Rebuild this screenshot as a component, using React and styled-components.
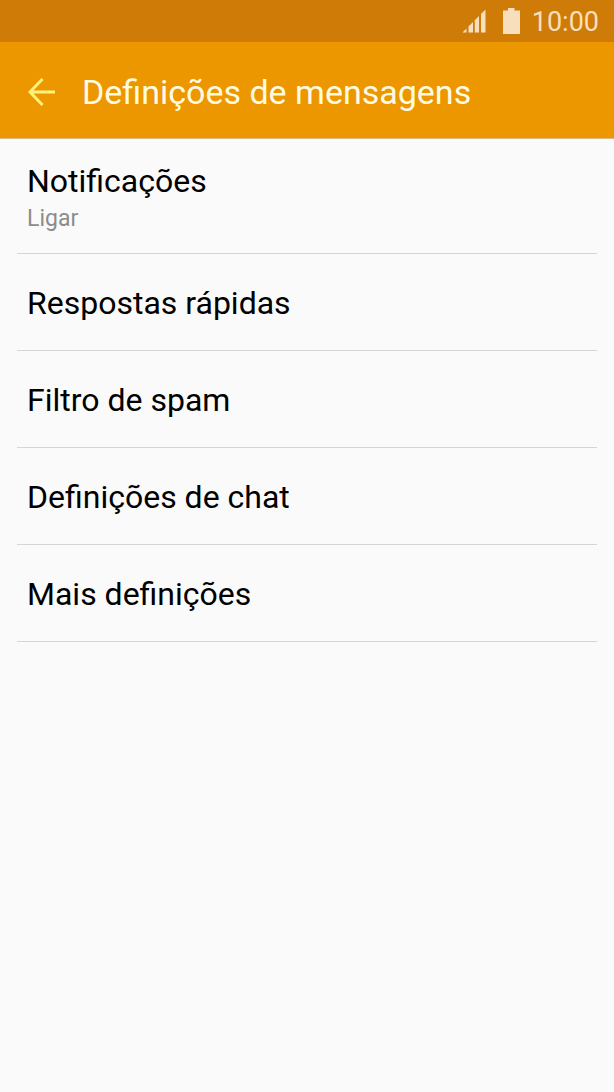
import React from 'react'
import styled, { createGlobalStyle } from 'styled-components'

const settings = [
    { id: 'notifications', title: 'Notificações', summary: 'Ligar' },
    { id: 'quick-replies', title: 'Respostas rápidas' },
    { id: 'spam', title: 'Filtro de spam' },
    { id: 'chat', title: 'Definições de chat' },
    { id: 'more', title: 'Mais definições' },
]

function SignalIcon() {
    return (
        <svg width="24" height="24" viewBox="0 0 24 24" fill="currentColor" aria-hidden="true">
            <path d="M0.5 23.5L4.5 19.5V23.5Z" />
            <path d="M6.5 23.5V17.5L11 13V23.5Z" />
            <path d="M12.8 23.5V11.2L17 7V23.5Z" />
            <path d="M19 23.5V5L23.5 0.5V23.5Z" />
        </svg>
    )
}

function BatteryIcon() {
    return (
        <svg width="18" height="26" viewBox="0 0 18 26" fill="currentColor" aria-hidden="true">
            <path d="M6 0H12.5V2.5H18V26H1V2.5H6Z" />
        </svg>
    )
}

function BackIcon() {
    return (
        <svg width="28" height="28" viewBox="0 0 28 28" fill="none" stroke="currentColor" strokeWidth="3" aria-hidden="true">
            <path d="M27 14H2M14.5 1L2 14L14.5 27" />
        </svg>
    )
}

function App() {
    return (
        <>
            <GlobalStyle />
            <StatusBar>
                <SignalIcon />
                <BatteryIcon />
                <time>10:00</time>
            </StatusBar>
            <Header>
                <BackButton type="button" aria-label="Voltar">
                    <BackIcon />
                </BackButton>
                <h1>Definições de mensagens</h1>
            </Header>
            <SettingsList>
                {settings.map(({ id, title, summary }) => (
                    <li key={id}>
                        <SettingButton type="button" $tall={Boolean(summary)}>
                            <Title>{title}</Title>
                            {summary && <Summary>{summary}</Summary>}
                        </SettingButton>
                    </li>
                ))}
            </SettingsList>
        </>
    )
}

const GlobalStyle = createGlobalStyle`
    *{
        box-sizing: border-box;
    }
    body{
        margin: 0;
        background: #fafafa;
        color: #000;
        font-family: Roboto, sans-serif;
    }
`;

const StatusBar = styled.div`
    display: flex;
    align-items: center;
    justify-content: flex-end;
    height: 42px;
    padding: 2px 15px 0;
    background: #cf7b07;
    color: #f7dfbd;
    svg{
        margin-bottom: 2px;
        margin-right: 16px;
    }
    svg + svg{
        margin-right: 12px;
    }
    time{
        font-size: 27px;
        line-height: 34px;
    }
`;

const Header = styled.header`
    display: flex;
    align-items: center;
    gap: 26px;
    height: 97px;
    padding: 0 28px;
    border-bottom: 1px solid #dcb98a;
    background: #ec9600;
    color: #fffbe0;
    h1{
        margin: 0;
        padding-top: 4px;
        font-size: 34px;
        font-weight: 400;
        line-height: 40px;
    }
`;

const BackButton = styled.button`
    display: flex;
    padding: 4px 0 0;
    border: none;
    background: none;
    color: #fff27a;
    cursor: pointer;
`;

const SettingsList = styled.ul`
    margin: 0;
    padding: 0 17px;
    list-style: none;
`;

const SettingButton = styled.button`
    display: flex;
    flex-direction: column;
    justify-content: center;
    width: 100%;
    min-height: ${props => props.$tall ? '115px' : '97px'};
    padding: ${props => props.$tall ? '6px' : '2px'} 10px 0;
    border: none;
    border-bottom: 1px solid #d5d5d5;
    background: none;
    color: inherit;
    font-family: inherit;
    text-align: left;
    cursor: pointer;
`;

const Title = styled.span`
    font-size: 32px;
    line-height: 40px;
`;

const Summary = styled.span`
    color: #8c8c8c;
    font-size: 23px;
    line-height: 36px;
`;

export default App
